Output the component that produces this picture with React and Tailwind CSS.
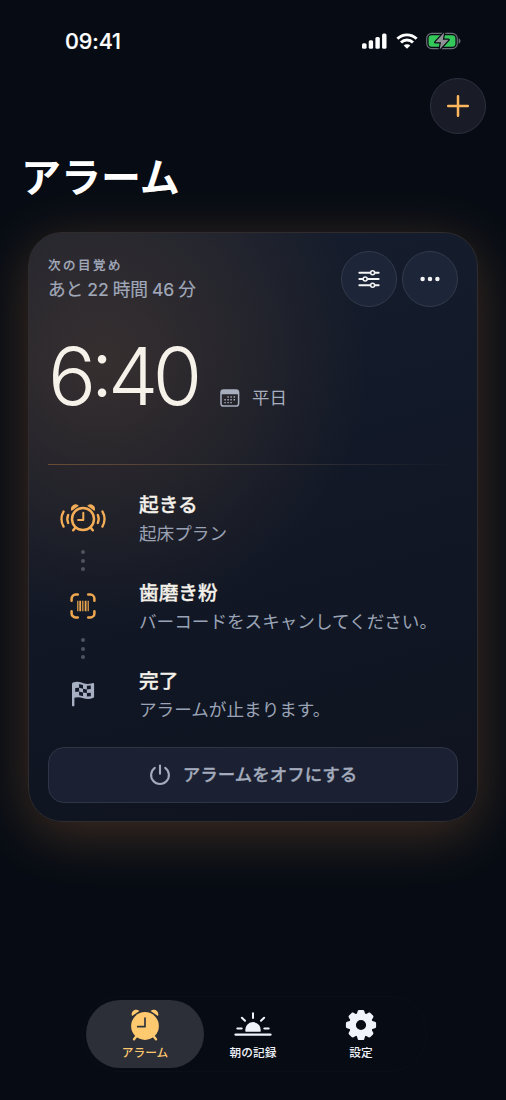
import React, { useState } from 'react';

const SignalIcon = () => (
  <svg width="25" height="16" viewBox="0 0 25 16" fill="currentColor">
    <rect x="0" y="10.2" width="4.6" height="5.6" rx="1.5" />
    <rect x="6.7" y="7.2" width="4.4" height="8.6" rx="1.5" />
    <rect x="13.4" y="4" width="4.4" height="11.8" rx="1.5" />
    <rect x="20.1" y="0.4" width="4.4" height="15.4" rx="1.5" />
  </svg>
);

const WifiIcon = () => (
  <svg width="22" height="16" viewBox="0 0 22 16" fill="none" stroke="currentColor" strokeWidth="2.9">
    <path d="M1.4 5.8a13.6 13.6 0 0 1 19.2 0" />
    <path d="M5 9.5a8.5 8.5 0 0 1 12 0" />
    <path d="M11 15.8l-3.3-3.3a4.7 4.7 0 0 1 6.6 0z" fill="currentColor" stroke="none" />
  </svg>
);

const BatteryIcon = () => (
  <svg width="35" height="18" viewBox="0 0 35 18">
    <rect x="0.7" y="1.4" width="30.6" height="15.2" rx="5" fill="none" stroke="#6b6e74" strokeWidth="1.2" />
    <rect x="2.6" y="3.3" width="26.8" height="11.4" rx="3.2" fill="#34c759" />
    <path d="M32.7 6.3c1.2.6 1.8 1.6 1.8 2.7s-.6 2.1-1.8 2.7z" fill="#6b6e74" />
    <path d="M18.2 0.6L9.2 10.2h5.8l-1.4 7.4 9-9.8h-5.8z" fill="#8f9195" stroke="#070c14" strokeWidth="2.4" strokeLinejoin="round" paintOrder="stroke" />
  </svg>
);

const PlusIcon = () => (
  <svg width="24" height="24" viewBox="0 0 24 24" fill="none" stroke="currentColor" strokeWidth="2.5" strokeLinecap="round">
    <path d="M12 2.2v19.6M2.2 12h19.6" />
  </svg>
);

const SlidersIcon = () => (
  <svg width="22" height="20" viewBox="0 0 22 20" fill="none" stroke="currentColor" strokeWidth="2.1" strokeLinecap="round">
    <path d="M1.4 3.7h10.8M17 3.7h3.6M1.4 10h3.4M9.6 10h11M1.4 16.3h10.8M17 16.3h3.6" />
    <g strokeWidth="1.5">
      <circle cx="14.6" cy="3.7" r="2" />
      <circle cx="7.2" cy="10" r="2" />
      <circle cx="14.6" cy="16.3" r="2" />
    </g>
  </svg>
);

const MoreIcon = () => (
  <svg width="20" height="6" viewBox="0 0 20 6" fill="currentColor">
    <circle cx="2.6" cy="3" r="2.25" />
    <circle cx="10" cy="3" r="2.25" />
    <circle cx="17.4" cy="3" r="2.25" />
  </svg>
);

const CalendarIcon = () => (
  <svg width="20" height="18" viewBox="0 0 20 18">
    <rect x="1" y="1" width="17.6" height="16" rx="2.6" fill="none" stroke="currentColor" strokeWidth="1.5" />
    <path d="M1 5.2V3.4A2.4 2.4 0 0 1 3.4 1h12.8a2.4 2.4 0 0 1 2.4 2.4v1.8z" fill="currentColor" />
    <g fill="currentColor">
      <path d="M7.4 7.3h1.4v1.4H7.4zM10.4 7.3h1.4v1.4h-1.4zM13.6 7.3H15v1.4h-1.4z" />
      <path d="M4.4 10.1h1.4v1.4H4.4zM7.4 10.1h1.4v1.4H7.4zM10.4 10.1h1.4v1.4h-1.4zM13.6 10.1H15v1.4h-1.4z" />
      <path d="M4.4 12.9h1.4v1.4H4.4zM7.4 12.9h1.4v1.4H7.4zM10.4 12.9h1.4v1.4h-1.4z" />
    </g>
  </svg>
);

const AlarmWavesIcon = () => (
  <svg width="48" height="30" viewBox="-24 -16 48 30" fill="none" stroke="currentColor" strokeWidth="2.5" strokeLinecap="round">
    <circle cx="0" cy="0" r="11" />
    <path d="M.3-6.2V1h-5.2" strokeWidth="2" strokeLinejoin="round" />
    <path d="M-7.6 8.6l-2.2 2.6M7.6 8.6l2.2 2.6" />
    <path d="M-11.2-9c-1.2-3.4 3.2-6.6 6-4.2zM11.2-9c1.2-3.4-3.2-6.6-6-4.2z" fill="currentColor" strokeWidth="1.2" />
    <g strokeWidth="2.3">
      <path d="M-14.8-4a9.6 9.6 0 0 0 0 8M14.8-4a9.6 9.6 0 0 1 0 8" />
      <path d="M-19.4-7.6a15.5 15.5 0 0 0 0 15.2M19.4-7.6a15.5 15.5 0 0 1 0 15.2" />
    </g>
  </svg>
);

const BarcodeIcon = () => (
  <svg width="26" height="26" viewBox="0 0 26 26" fill="none" stroke="currentColor">
    <g strokeWidth="2.5" strokeLinecap="round">
      <path d="M1.6 7.8V5.6a4 4 0 0 1 4-4h2.2" />
      <path d="M18.2 1.6h2.2a4 4 0 0 1 4 4v2.2" />
      <path d="M24.4 18.2v2.2a4 4 0 0 1-4 4h-2.2" />
      <path d="M7.8 24.4H5.6a4 4 0 0 1-4-4v-2.2" />
    </g>
    <path d="M7.8 7.8v10.4M12.8 7.8v10.4M18.2 7.8v10.4" strokeWidth="1.2" />
    <path d="M10.2 7.8v10.4M15.6 7.8v10.4" strokeWidth="1.8" />
  </svg>
);

const FlagIcon = () => (
  <svg width="24" height="26" viewBox="0 0 24 26">
    <path d="M1 3c0-.7.4-1.1 1-1.4C6.4-.4 9.6 1.2 12.5 2.2c2.9 1 5.6.9 8.7 0 1.1-.3 1.9.2 1.9 1.2v12.2c0 .8-.4 1.2-1.2 1.5-3.5 1.2-6.6 1-9.5.1-3-1-5.9-1.6-9-.4v7.4c0 .7-.5 1.2-1.2 1.2S1 24.9 1 24.2z" fill="currentColor" />
    <g fill="#121827">
      <path d="M8.1 3.1l3.9 1v3.7l-3.9-1zM15.9 4.7l3.9-.3v3.7l-3.9.3z" />
      <path d="M4.2 7l3.9-.2v3.7l-3.9.4zM12 7.8l3.9.6v3.7l-3.9-.6z" />
      <path d="M8.1 10.5l3.9 1v3.7l-3.9-1zM15.9 12.1l3.9-.4v3.5l-3.9.4z" />
    </g>
  </svg>
);

const PowerIcon = () => (
  <svg width="22" height="22" viewBox="0 0 22 22" fill="none" stroke="currentColor" strokeWidth="2.1" strokeLinecap="round">
    <path d="M11 1.6v8.2" />
    <path d="M5.8 3.9a8.9 8.9 0 1 0 10.4 0" />
  </svg>
);

const AlarmFillIcon = () => (
  <svg width="30" height="32" viewBox="-15 -17 30 32">
    <path d="M-8 9.5l-3 3.8M8 9.5l3 3.8" stroke="currentColor" strokeWidth="2.4" strokeLinecap="round" />
    <circle cx="0" cy="0" r="13.9" fill="currentColor" />
    <path d="M-12.9-9.9c-2-4 3.2-8.6 7.3-5.2zM12.9-9.9c2-4-3.2-8.6-7.3-5.2z" fill="currentColor" />
    <path d="M0-8V.7h-7.3" fill="none" stroke="#33353c" strokeWidth="1.7" strokeLinecap="round" strokeLinejoin="round" />
  </svg>
);

const SunriseIcon = () => (
  <svg width="38" height="32" viewBox="0 0 38 32" stroke="currentColor" strokeWidth="2" strokeLinecap="round">
    <path d="M11.5 22.8a7.7 7.9 0 1 1 15 0z" fill="currentColor" stroke="none" />
    <path d="M1.6 25.6h34.8" strokeWidth="2.4" />
    <path d="M19 4.3v4.6M7.9 8.7l3.1 3.1M30.1 8.7l-3.1 3.1M3.3 19.6h4.4M30.3 19.6h4.4" />
  </svg>
);

const teeth = [0, 45, 90, 135, 180, 225, 270, 315];

const GearIcon = () => (
  <svg width="32" height="32" viewBox="-16 -16 32 32">
    <circle cx="0" cy="0" r="8.5" fill="none" stroke="currentColor" strokeWidth="6.8" />
    {teeth.map((deg) => (
      <path key={deg} transform={`rotate(${deg})`} d="M-4.3-10.5l1-3.4c.2-.8.7-1.2 1.5-1.2h3.6c.8 0 1.3.4 1.5 1.2l1 3.4z" fill="currentColor" />
    ))}
  </svg>
);

const steps = [
  { title: '起きる', note: '起床プラン', icon: AlarmWavesIcon, color: 'text-[#f5ae58]' },
  { title: '歯磨き粉', note: 'バーコードをスキャンしてください。', icon: BarcodeIcon, color: 'text-[#f0a850]' },
  { title: '完了', note: 'アラームが止まります。', icon: FlagIcon, color: 'text-[#a7b0c3]' },
];

const tabs = [
  { id: 'alarm', label: 'アラーム', icon: AlarmFillIcon },
  { id: 'log', label: '朝の記録', icon: SunriseIcon },
  { id: 'settings', label: '設定', icon: GearIcon },
];

const Step = ({ step, last }) => {
  const Icon = step.icon;
  return (
    <div className="flex h-[88px]">
      <div className="flex w-[70px] shrink-0 flex-col items-center">
        <div className={`flex h-[51px] items-center ${step.color}`}>
          <Icon />
        </div>
        {!last && (
          <div className="mt-[7px] flex flex-col gap-[4.7px]">
            <span className="size-1 rounded-full bg-[#4d535f]" />
            <span className="size-1 rounded-full bg-[#4d535f]" />
            <span className="size-1 rounded-full bg-[#4d535f]" />
          </div>
        )}
      </div>
      <div className="ml-[21px] whitespace-nowrap">
        <p className="text-[19.7px] leading-[26px] font-medium text-[#f4f1ea] [-webkit-text-stroke:0.3px]">{step.title}</p>
        <p className="mt-[3px] text-[17.6px] leading-[26px] text-[#9aa3b5]">{step.note}</p>
      </div>
    </div>
  );
};

const App = () => {
  const [tab, setTab] = useState('alarm');

  return (
    <div className="flex h-[1100px] w-[506px] flex-col overflow-hidden bg-[#070c14] font-['Inter','Noto_Sans_CJK_JP',sans-serif] text-white">
      {/* Status bar */}
      <div className="flex h-[78px] shrink-0 items-center justify-between pt-1 pr-[45px] pl-[65px]">
        <span className="text-[21.5px] font-medium tracking-[-0.1px] [-webkit-text-stroke:0.2px]">09:41</span>
        <div className="flex items-center">
          <SignalIcon />
          <span className="ml-[9px]"><WifiIcon /></span>
          <span className="ml-2"><BatteryIcon /></span>
        </div>
      </div>

      {/* Toolbar */}
      <div className="flex justify-end pr-5">
        <button className="flex size-14 items-center justify-center rounded-full border border-[#2b303e] bg-[#191c26] text-[#fdb55e]">
          <PlusIcon />
        </button>
      </div>

      <h1 className="mt-[14px] ml-[21px] text-[40px] leading-[60px] font-bold">アラーム</h1>

      {/* Alarm card */}
      <section className="mx-[28px] mt-[24px] h-[590px] shrink-0 rounded-[34px] border border-[#302c2d] bg-[radial-gradient(circle_at_75px_130px,rgba(255,165,80,0.145),rgba(255,165,80,0.085)_120px,rgba(255,165,80,0)_265px),linear-gradient(165deg,#171e2d_0%,#121928_35%,#0f131f_100%)] px-[19px] shadow-[0_12px_56px_rgba(255,160,80,0.23)]">
        <div className="flex justify-between pt-[18px]">
          <div className="pt-[6px]">
            <p className="text-[12.5px] leading-[18px] font-medium tracking-[2.5px] text-[#a3aabb] [-webkit-text-stroke:0.2px]">次の目覚め</p>
            <p className="mt-[3px] text-[17.7px] leading-[24px] tracking-[-0.1px] text-[#a0a8b9] [-webkit-text-stroke:0.2px] [word-spacing:-0.8px]">あと 22 時間 46 分</p>
          </div>
          <div className="flex gap-[5px] text-[#f4f4f5]">
            <button className="flex size-[56px] items-center justify-center rounded-full border border-[#323a4b] bg-[#1d2538]">
              <SlidersIcon />
            </button>
            <button className="flex size-[56px] items-center justify-center rounded-full border border-[#323a4b] bg-[#1d2538]">
              <MoreIcon />
            </button>
          </div>
        </div>

        <div className="mt-[28px] flex h-[80px] items-end">
          <span className="w-[172px] text-[80px] leading-[78px] font-light tracking-[-5.4px] whitespace-nowrap text-[#f6f2ea]">
            6<span className="relative -top-[8px]">:</span>40
          </span>
          <span className="flex items-center gap-3 pb-[4px] text-[17.5px] leading-[26px] text-[#a7aebe]">
            <CalendarIcon />
            平日
          </span>
        </div>

        <div className="mt-[49px] h-px bg-gradient-to-r from-[#6a4c35] via-[#3a3737] to-transparent" />

        <div className="mt-[27px] h-[255px]">
          {steps.map((step, i) => (
            <Step key={step.title} step={step} last={i === steps.length - 1} />
          ))}
        </div>

        <button className="flex h-14 w-full items-center justify-center gap-3 rounded-2xl border border-[#2e3645] bg-[#1b2132] text-[17.5px] font-medium text-[#a3abbc] [-webkit-text-stroke:0.3px]">
          <PowerIcon />
          アラームをオフにする
        </button>
      </section>

      {/* Tab bar */}
      <nav className="mt-[174px] ml-[82px] flex h-[76px] w-[345px] rounded-full border border-[#0b1018] px-[3px] py-[3px]">
        {tabs.map(({ id, label, icon: Icon }) => (
          <button
            key={id}
            onClick={() => setTab(id)}
            className={`-mr-[10px] flex w-[118px] shrink-0 flex-col items-center rounded-full pt-[9px] ${
              tab === id ? 'bg-[#2c2f37] text-[#ffc96f]' : 'text-[#f1f3fb]'
            }`}
          >
            <span className="flex h-8 items-center">
              <Icon />
            </span>
            <span className="mt-[3px] text-[11.7px] leading-[18px] font-medium">{label}</span>
          </button>
        ))}
      </nav>
    </div>
  );
};

export default App;
